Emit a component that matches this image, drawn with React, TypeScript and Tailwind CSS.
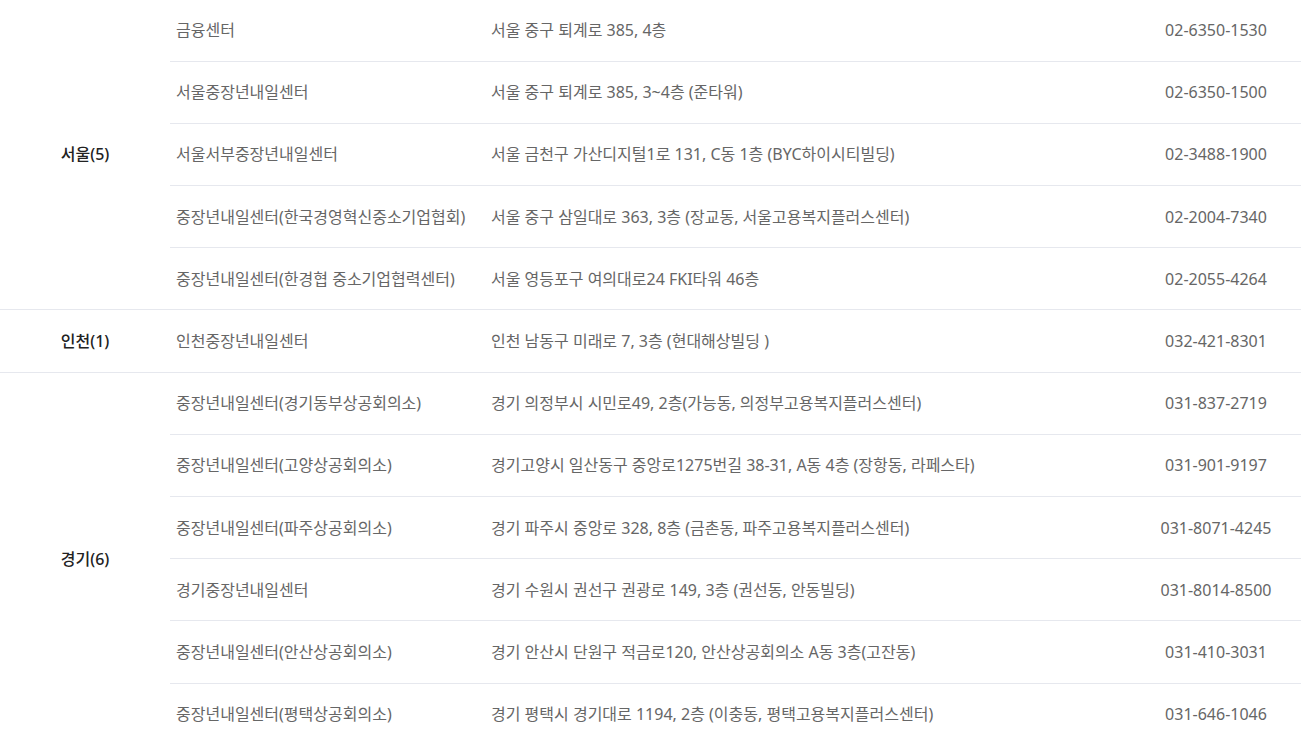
import React from 'react';

type Row = { name: string; addr: string; tel: string };
type Group = { region: string; rows: Row[] };

const groups: Group[] = [
	{
		region: '서울(5)',
		rows: [
			{ name: '금융센터', addr: '서울 중구 퇴계로 385, 4층', tel: '02-6350-1530' },
			{ name: '서울중장년내일센터', addr: '서울 중구 퇴계로 385, 3~4층 (준타워)', tel: '02-6350-1500' },
			{ name: '서울서부중장년내일센터', addr: '서울 금천구 가산디지털1로 131, C동 1층 (BYC하이시티빌딩)', tel: '02-3488-1900' },
			{ name: '중장년내일센터(한국경영혁신중소기업협회)', addr: '서울 중구 삼일대로 363, 3층 (장교동, 서울고용복지플러스센터)', tel: '02-2004-7340' },
			{ name: '중장년내일센터(한경협 중소기업협력센터)', addr: '서울 영등포구 여의대로24 FKI타워 46층', tel: '02-2055-4264' },
		],
	},
	{
		region: '인천(1)',
		rows: [{ name: '인천중장년내일센터', addr: '인천 남동구 미래로 7, 3층 (현대해상빌딩 )', tel: '032-421-8301' }],
	},
	{
		region: '경기(6)',
		rows: [
			{ name: '중장년내일센터(경기동부상공회의소)', addr: '경기 의정부시 시민로49, 2층(가능동, 의정부고용복지플러스센터)', tel: '031-837-2719' },
			{ name: '중장년내일센터(고양상공회의소)', addr: '경기고양시 일산동구 중앙로1275번길 38-31, A동 4층 (장항동, 라페스타)', tel: '031-901-9197' },
			{ name: '중장년내일센터(파주상공회의소)', addr: '경기 파주시 중앙로 328, 8층 (금촌동, 파주고용복지플러스센터)', tel: '031-8071-4245' },
			{ name: '경기중장년내일센터', addr: '경기 수원시 권선구 권광로 149, 3층 (권선동, 안동빌딩)', tel: '031-8014-8500' },
			{ name: '중장년내일센터(안산상공회의소)', addr: '경기 안산시 단원구 적금로120, 안산상공회의소 A동 3층(고잔동)', tel: '031-410-3031' },
			{ name: '중장년내일센터(평택상공회의소)', addr: '경기 평택시 경기대로 1194, 2층 (이충동, 평택고용복지플러스센터)', tel: '031-646-1046' },
		],
	},
];

export default function App() {
	return (
		<div className="bg-white w-[1301px] h-[745px] overflow-hidden font-['Noto_Sans','Noto_Sans_CJK_KR',sans-serif] text-[16px]">
			<table className="w-full table-fixed border-collapse -mt-px">
				<colgroup>
					<col className="w-[170px]" />
					<col className="w-[315px]" />
					<col className="w-[646px]" />
					<col className="w-[170px]" />
				</colgroup>
				<tbody>
					{groups.map((g) =>
						g.rows.map((r, i) => (
							<tr key={g.region + i} className="h-[62.2px] border-b border-[#e6e8ee]">
								{i === 0 && (
									<td rowSpan={g.rows.length} className="text-center align-middle text-[#222] font-medium border-b border-[#e6e8ee]">
										{g.region}
									</td>
								)}
								<td className="pl-[6px] text-[#666] whitespace-nowrap">{r.name}</td>
								<td className="pl-[6px] text-[#666] whitespace-nowrap">{r.addr}</td>
								<td className="text-center text-[#666] whitespace-nowrap">{r.tel}</td>
							</tr>
						))
					)}
				</tbody>
			</table>
		</div>
	);
}
